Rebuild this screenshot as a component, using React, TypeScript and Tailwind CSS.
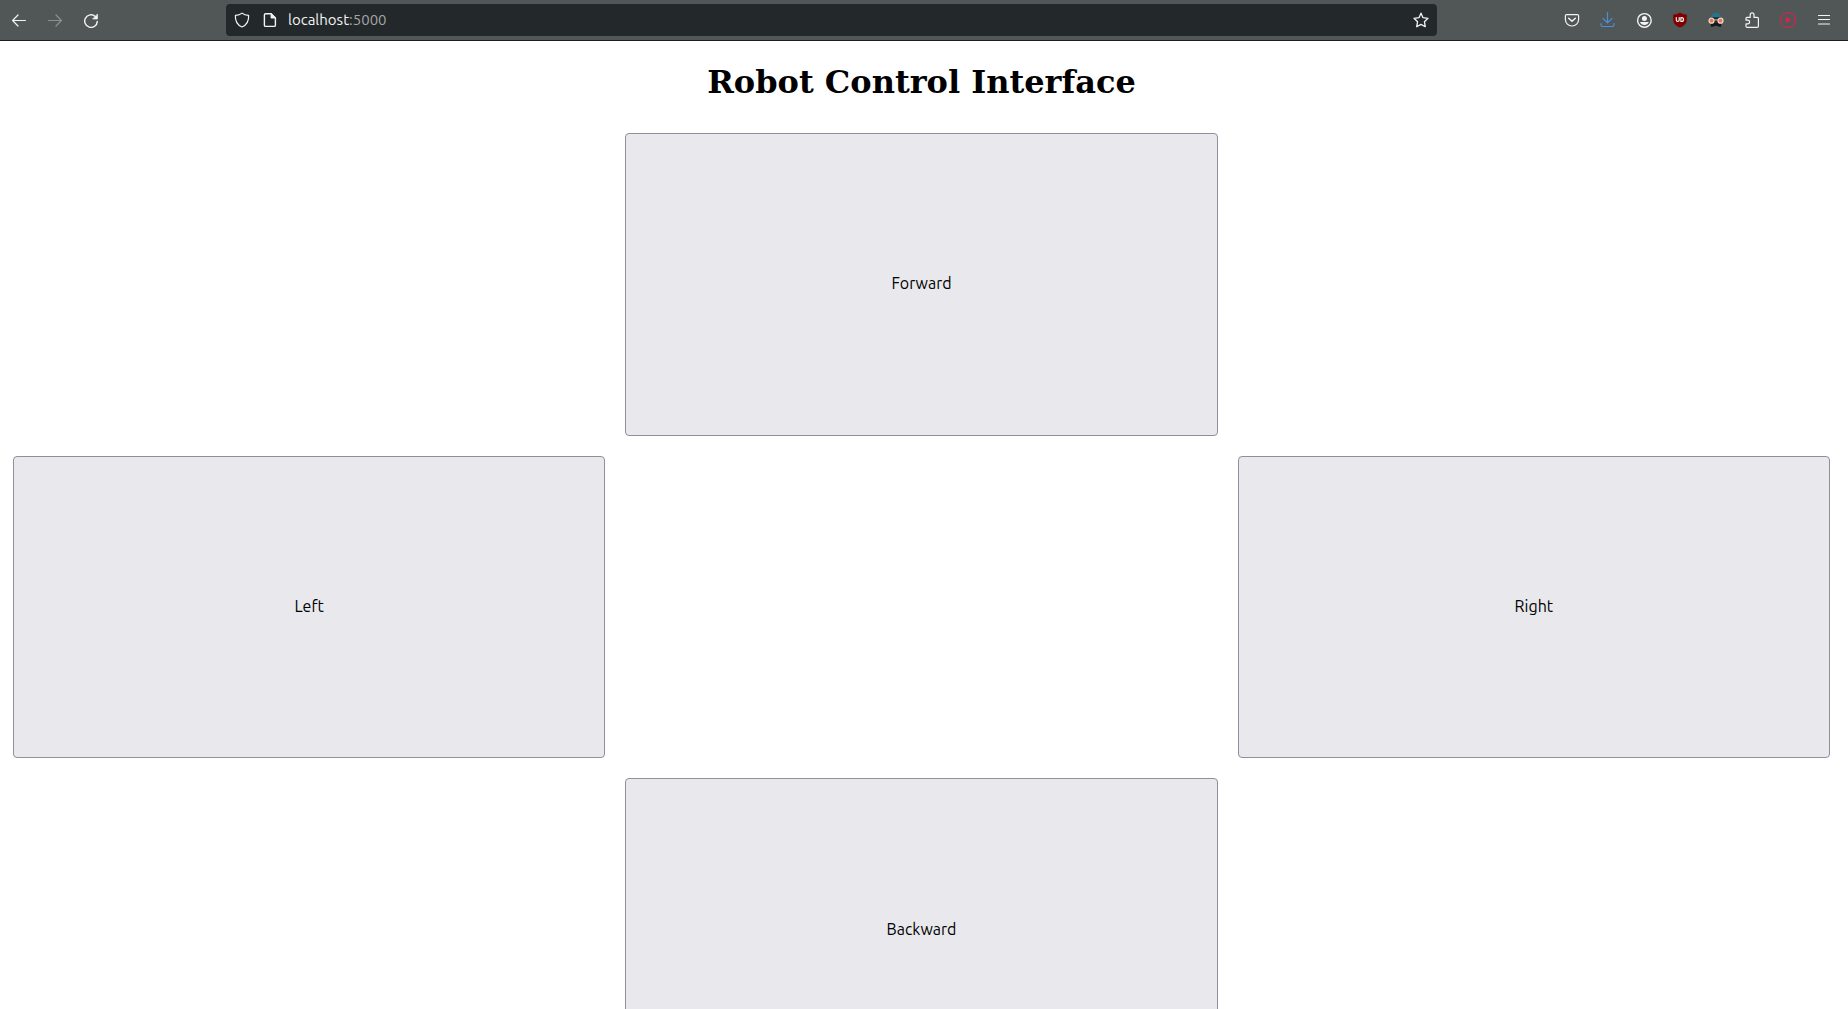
import type { ReactNode } from "react";

function Icon({ children, className = "" }: { children: ReactNode; className?: string }) {
  return (
    <svg
      viewBox="0 0 16 16"
      className={`size-4 shrink-0 ${className}`}
      fill="none"
      stroke="currentColor"
      strokeWidth="1.2"
      strokeLinecap="round"
      strokeLinejoin="round"
      aria-hidden="true"
    >
      {children}
    </svg>
  );
}

function ToolButton({ label, children, disabled = false }: { label: string; children: ReactNode; disabled?: boolean }) {
  return (
    <button
      type="button"
      aria-label={label}
      disabled={disabled}
      className="flex h-9 w-9 shrink-0 items-center justify-center text-[#f4f4f4] disabled:text-[#8b8f8f]"
    >
      {children}
    </button>
  );
}

function Toolbar() {
  return (
    <header className="flex shrink-0 items-center border-b border-[#1c1f20] bg-[#515756] pt-0.5 pr-1.5 pb-0.5 pl-px">
      <ToolButton label="Back">
        <Icon>
          <path d="M14.4 8.5H1.8M7 3 1.6 8.5 7 14" />
        </Icon>
      </ToolButton>
      <ToolButton label="Forward one page" disabled>
        <Icon>
          <path d="M1.6 8.5h12.6M9 3l5.4 5.5L9 14" />
        </Icon>
      </ToolButton>
      <ToolButton label="Reload">
        <Icon>
          <path d="M12.2 4.400A6.300 6.300 0 1 0 14.300 9.400" strokeWidth="1.400" />
          <path d="M14.400 2.500v4.400H10z" fill="currentColor" strokeWidth="0.800" />
        </Icon>
      </ToolButton>
      <div className="w-[117px] shrink-0" />
      <div className="flex h-8 min-w-0 flex-1 items-center rounded bg-[#23282a] pr-2 pl-2 text-[#f4f4f4]">
        <Icon>
          <path d="M8 1.100C6.500 2.400 4 3.200 1.400 3.300 1 8.600 3.400 13 8 15c4.600-2 7-6.400 6.600-11.700C12 3.200 9.500 2.400 8 1.100z" />
        </Icon>
        <Icon className="ml-3">
          <path d="M3.600 1.700h5.500l4.300 4.300v7.200c0 .7-.5 1.200-1.200 1.200H3.600c-.7 0-1.200-.5-1.200-1.200V2.900c0-.7.500-1.200 1.200-1.200z" strokeWidth="1.400" />
          <path d="M9 1.700v4.400h4.400z" fill="currentColor" strokeWidth="0.800" />
        </Icon>
        <label className="relative ml-2.5 flex h-8 min-w-0 flex-1 items-center font-['Ubuntu','Noto_Sans',sans-serif] text-[15px]">
          <input
            type="text"
            aria-label="Address"
            defaultValue="localhost:5000"
            className="peer w-full bg-transparent text-transparent outline-none focus:text-[#f4f4f4]"
          />
          <span className="pointer-events-none absolute left-0 peer-focus:hidden" aria-hidden="true">
            localhost<span className="text-[#a3a6a7]">:5000</span>
          </span>
        </label>
        <button type="button" aria-label="Bookmark this page">
          <Icon>
            <path d="m8 1.200 2 4.500 5 .6-3.600 3.400.9 5L8 12.400l-4.300 2.300.9-5L1 6.300l5-.6z" strokeWidth="1.300" />
          </Icon>
        </button>
      </div>
      <div className="w-[117px] shrink-0" />
      <ToolButton label="Save to Pocket">
        <Icon>
          <path d="M2.600 2.600h10.800c.7 0 1.200.5 1.200 1.200v3.600a6.600 6.600 0 0 1-13.200 0V3.800c0-.7.500-1.200 1.200-1.200z" />
          <path d="M4.700 6.200 8 9.300l3.300-3.100" strokeWidth="1.500" />
        </Icon>
      </ToolButton>
      <ToolButton label="Downloads">
        <Icon className="text-[#4a90d9]">
          <path d="M7.500.6v9.800M3 6.400l4.500 4.400L12 6.400M1 11.500V13c0 .9.600 1.500 1.500 1.500h10c.9 0 1.500-.6 1.500-1.500v-1.500" />
        </Icon>
      </ToolButton>
      <ToolButton label="Account">
        <Icon>
          <circle cx="8.400" cy="8.400" r="6.800" strokeWidth="1.400" />
          <circle cx="8.400" cy="6.600" r="2.500" fill="currentColor" stroke="none" />
          <path d="M4 10.100h8.800c-.7 1.800-2.400 2.900-4.400 2.900s-3.700-1.100-4.400-2.900z" fill="currentColor" stroke="none" />
        </Icon>
      </ToolButton>
      <ToolButton label="Content blocker">
        <Icon>
          <path d="M8 .5c2 1.500 4.500 2 6.800 2v5C14.800 11.500 12 14 8 15.500 4 14 1.200 11.500 1.200 7.500v-5C3.500 2.500 6 2 8 .5z" fill="#800000" stroke="none" />
          <path d="M4.300 5.600v2.500c0 .9.500 1.400 1.400 1.400s1.500-.5 1.500-1.400V5.600M8.900 5.600v3.900h.7a1.950 1.950 0 0 0 0-3.900z" strokeWidth="1.200" />
        </Icon>
      </ToolButton>
      <ToolButton label="Disguise extension">
        <Icon>
          <path d="M2.200 6.500C2.500 3 4.900.7 8 .7s5.500 2.300 5.800 5.800z" fill="#24758a" stroke="none" />
          <path d="M2.800 5.200h10.400V12H2.800z" fill="#252a2d" stroke="none" />
          <path d="M2.800 14.800V12c1.700-.6 3-.9 5.200-.9s3.500.3 5.200.9v2.800c-1.700 0-3.700-.3-5.200-1.300-1.500 1-3.500 1.300-5.200 1.300z" fill="#151819" stroke="none" />
          <circle cx="3.500" cy="8.700" r="2.500" fill="#e47456" stroke="#f6d6ca" />
          <circle cx="12.500" cy="8.700" r="2.500" fill="#e47456" stroke="#f6d6ca" />
          <path d="M6.300 7.900h3.400" stroke="#f6d6ca" strokeWidth="0.800" />
        </Icon>
      </ToolButton>
      <ToolButton label="Extensions">
        <Icon>
          <path d="M3 5.400h3.200V2.700a1.900 1.900 0 0 1 3.800 0v2.700h3.200c.7 0 1.200.5 1.200 1.200v7.600c0 .7-.5 1.200-1.200 1.200H3.200c-.7 0-1.200-.5-1.200-1.200v-2.400h1.800a1.800 1.800 0 0 0 0-3.600H2V6.400c0-.6.400-1 1-1z" />
        </Icon>
      </ToolButton>
      <ToolButton label="Media extension">
        <Icon className="text-[#cf2550]">
          <path d="M6.300.8A7.400 7.400 0 1 1 3.900 14.200" />
          <path d="M2.400 12.900A7.400 7.400 0 0 1 4.600 1.500" />
          <path d="M6.200 5.500v5L10.800 8z" fill="#e0234e" strokeWidth="0.800" />
        </Icon>
      </ToolButton>
      <ToolButton label="Application menu">
        <Icon>
          <path d="M2.500 3.500h11M2.500 7.500h11M2.500 12h11" />
        </Icon>
      </ToolButton>
    </header>
  );
}

function ControlButton({ label, className }: { label: string; className: string }) {
  return (
    <button
      type="button"
      className={`h-[30vh] rounded border border-[#8f8f9d] bg-[#e9e9ed] pb-0.5 font-['Ubuntu','Noto_Sans',sans-serif] text-base text-black hover:bg-[#d0d0d7] ${className}`}
    >
      {label}
    </button>
  );
}

export default function App() {
  return (
    <div className="flex h-screen flex-col overflow-hidden bg-white">
      <Toolbar />
      <main className="min-h-0 flex-1 overflow-y-auto pt-5 pr-[18px] pb-5 pl-[13px] [scrollbar-width:none]">
        <h1 className="mb-[30px] text-center font-['DejaVu_Serif',serif] text-[32px] leading-[42px] font-bold text-black">
          Robot Control Interface
        </h1>
        <div className="grid grid-cols-3 gap-5">
          <ControlButton label="Forward" className="col-start-2 row-start-1" />
          <ControlButton label="Left" className="col-start-1 row-start-2" />
          <ControlButton label="Right" className="col-start-3 row-start-2" />
          <ControlButton label="Backward" className="col-start-2 row-start-3" />
        </div>
      </main>
    </div>
  );
}
